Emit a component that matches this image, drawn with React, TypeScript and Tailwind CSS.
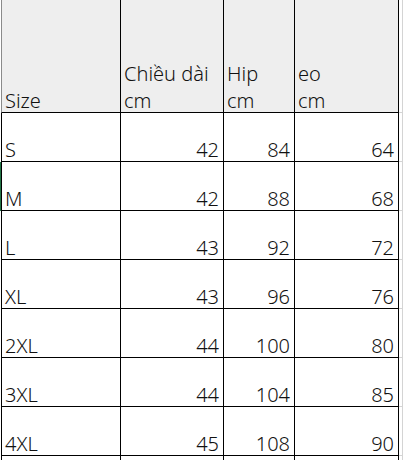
const rows = [
  { size: "S", len: 42, hip: 84, eo: 64 },
  { size: "M", len: 42, hip: 88, eo: 68 },
  { size: "L", len: 43, hip: 92, eo: 72 },
  { size: "XL", len: 43, hip: 96, eo: 76 },
  { size: "2XL", len: 44, hip: 100, eo: 80 },
  { size: "3XL", len: 44, hip: 104, eo: 85 },
  { size: "4XL", len: 45, hip: 108, eo: 90 },
];

function Head({ lines }: { lines: string[] }) {
  return (
    <div className="leading-[27px] -mb-[2px]">
      {lines.map((l) => (
        <div key={l} className="whitespace-nowrap">
          {l}
        </div>
      ))}
    </div>
  );
}

export default function App() {
  return (
    <div
      className="w-[404px] h-[460px] overflow-hidden bg-white text-[20px] font-light text-[#111]"
      style={{ fontFamily: '"Noto Sans", "Open Sans", sans-serif' }}
    >
      {/* header */}
      <div className="flex h-[113px]">
        <div className="w-px shrink-0" />
        <div className="w-[120px] shrink-0 flex items-end border-l border-b border-r border-l-[#8a8a8a] border-b-black border-r-black bg-[#eeeeee] pl-[3px]">
          <Head lines={["Size"]} />
        </div>
        <div className="w-[103px] shrink-0 flex items-end border-b border-r border-black bg-[#eeeeee] pl-[3px]">
          <Head lines={["Chiều dài", "cm"]} />
        </div>
        <div className="w-[71px] shrink-0 flex items-end border-b border-r border-black bg-[#eeeeee] pl-[3px]">
          <Head lines={["Hip", "cm"]} />
        </div>
        <div className="w-[104px] shrink-0 flex items-end border-b border-r border-black bg-[#eeeeee] pl-[3px]">
          <Head lines={["eo", "cm"]} />
        </div>
        <div className="w-[4px] shrink-0 border-b border-r border-[#d4d4d4]" />
      </div>

      {rows.map((r) => (
        <div key={r.size} className="flex h-[49px]">
          <div className={`w-px shrink-0 ${r.size === "M" ? "bg-[#217346]" : ""}`} />
          <div className="w-[120px] shrink-0 flex items-end border-l border-b border-r border-black pl-[3px] leading-[22px]">
            {r.size}
          </div>
          <div className="w-[103px] shrink-0 flex items-end justify-end border-b border-r border-black pr-[4px] leading-[22px]">
            {r.len}
          </div>
          <div className="w-[71px] shrink-0 flex items-end justify-end border-b border-r border-black pr-[4px] leading-[22px]">
            {r.hip}
          </div>
          <div className="w-[104px] shrink-0 flex items-end justify-end border-b border-r border-black pr-[4px] leading-[22px]">
            {r.eo}
          </div>
          <div className="w-[4px] shrink-0 border-b border-r border-[#d4d4d4]" />
        </div>
      ))}

      <div className="flex h-[49px]">
        <div className="w-px shrink-0" />
        <div className="w-[120px] shrink-0 border-l border-r border-black" />
        <div className="w-[103px] shrink-0 border-r border-black" />
        <div className="w-[71px] shrink-0 border-r border-black" />
        <div className="w-[104px] shrink-0 border-r border-black" />
        <div className="w-[4px] shrink-0 border-r border-[#d4d4d4]" />
      </div>
    </div>
  );
}
